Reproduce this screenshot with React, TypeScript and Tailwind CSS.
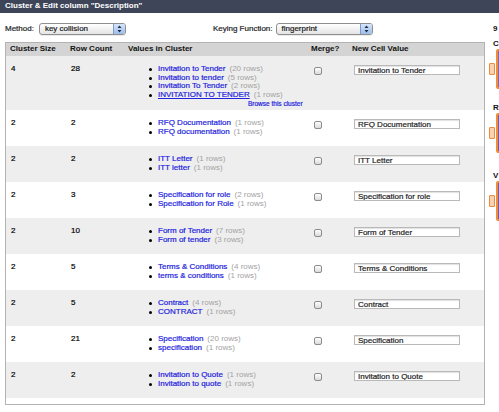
import React from 'react';

type Value = { label: string; count: number; underline?: boolean };

interface Cluster {
  size: number;
  rows: number;
  values: Value[];
  newValue: string;
  browse?: boolean;
}

const clusters: Cluster[] = [
  {
    size: 4,
    rows: 28,
    values: [
      { label: 'Invitation to Tender', count: 20 },
      { label: 'Invitation to tender', count: 5 },
      { label: 'Invitation To Tender', count: 2 },
      { label: 'INVITATION TO TENDER', count: 1, underline: true },
    ],
    newValue: 'Invitation to Tender',
    browse: true,
  },
  {
    size: 2,
    rows: 2,
    values: [
      { label: 'RFQ Documentation', count: 1 },
      { label: 'RFQ documentation', count: 1 },
    ],
    newValue: 'RFQ Documentation',
  },
  {
    size: 2,
    rows: 2,
    values: [
      { label: 'ITT Letter', count: 1 },
      { label: 'ITT letter', count: 1 },
    ],
    newValue: 'ITT Letter',
  },
  {
    size: 2,
    rows: 3,
    values: [
      { label: 'Specification for role', count: 2 },
      { label: 'Specification for Role', count: 1 },
    ],
    newValue: 'Specification for role',
  },
  {
    size: 2,
    rows: 10,
    values: [
      { label: 'Form of Tender', count: 7 },
      { label: 'Form of tender', count: 3 },
    ],
    newValue: 'Form of Tender',
  },
  {
    size: 2,
    rows: 5,
    values: [
      { label: 'Terms & Conditions', count: 4 },
      { label: 'terms & conditions', count: 1 },
    ],
    newValue: 'Terms & Conditions',
  },
  {
    size: 2,
    rows: 5,
    values: [
      { label: 'Contract', count: 4 },
      { label: 'CONTRACT', count: 1 },
    ],
    newValue: 'Contract',
  },
  {
    size: 2,
    rows: 21,
    values: [
      { label: 'Specification', count: 20 },
      { label: 'specification', count: 1 },
    ],
    newValue: 'Specification',
  },
  {
    size: 2,
    rows: 2,
    values: [
      { label: 'Invitation to Quote', count: 1 },
      { label: 'Invitation to quote', count: 1 },
    ],
    newValue: 'Invitation to Quote',
  },
];

function Select({ value, width }: { value: string; width: string }) {
  return (
    <div
      className={`${width} h-[12px] flex items-stretch rounded-[3px] border border-[#8f8f8f] bg-gradient-to-b from-white to-[#e4e4e4] shadow-[0_1px_0_rgba(0,0,0,0.08)] overflow-hidden`}
    >
      <span className="flex-1 pl-[5px] leading-[10px] text-[8px] text-[#1a1a1a]">{value}</span>
      <span className="w-[12px] flex items-center justify-center border-l border-[#7f9cc6] bg-gradient-to-b from-[#d6e6fb] to-[#9dbde9]">
        <svg width="5" height="8" viewBox="0 0 5 8">
          <path d="M2.5 0.5 L4.5 3 L0.5 3 Z" fill="#1d2a4a" />
          <path d="M2.5 7.5 L4.5 5 L0.5 5 Z" fill="#1d2a4a" />
        </svg>
      </span>
    </div>
  );
}

function Checkbox() {
  return (
    <div className="w-[8px] h-[8px] rounded-[2px] border border-[#8c8c8c] bg-gradient-to-b from-white to-[#d9d9d9]" />
  );
}

function ClusterRow({ c, shaded }: { c: Cluster; shaded: boolean }) {
  return (
    <div
      className={`grid grid-cols-[60px_58px_183px_41px_1fr] ${c.browse ? 'h-[54px]' : 'h-[36px]'} ${shaded ? 'bg-[#eeeeee]' : 'bg-white'}`}
    >
      <div className="pl-[5px] pt-[9px] text-black">{c.size}</div>
      <div className="pl-[5px] pt-[9px] text-black">{c.rows}</div>
      <div className="pl-[5px] pt-[9px]">
        {c.values.map((v) => (
          <div key={v.label} className="flex items-center pl-[20px] h-[8.7px] whitespace-nowrap">
            <span className="w-[3px] h-[3px] rounded-full bg-black mr-[6px] shrink-0" />
            <span className={`text-[#2222dd] ${v.underline ? 'underline' : ''}`}>{v.label}</span>
            <span className="ml-[4px] text-[#a3a3a3] [-webkit-text-stroke:0px]">({v.count} rows)</span>
          </div>
        ))}
        {c.browse && (
          <div className="pl-[119px] text-[6.5px] leading-[8px] text-[#2222dd] whitespace-nowrap">
            Browse this cluster
          </div>
        )}
      </div>
      <div className="pl-[7px] pt-[10.5px]">
        <Checkbox />
      </div>
      <div className="pl-[6px] pt-[9px]">
        <input
          readOnly
          value={c.newValue}
          className="w-[106px] h-[10px] border border-[#b9b9b9] bg-white pl-[3px] text-[8px] leading-[8px] text-[#222] outline-none shadow-[inset_0_1px_1px_rgba(0,0,0,0.12)] [font-family:'Liberation_Sans',Arial,sans-serif] [-webkit-text-stroke:0.2px]"
        />
      </div>
    </div>
  );
}

function SidePanel({ label, solid, top }: { label: string; solid: boolean; top: string }) {
  return (
    <div className={top}>
      <div className="pl-[4px] font-bold leading-[10px] text-[#111]">{label}</div>
      <div className="flex items-start">
        <div className="mt-[14px] w-[6px] h-[12px] rounded-[1px] border border-[#ee8a3e] bg-[#fbd2b0]" />
        <div
          className={`ml-[1px] w-[24px] h-[40px] rounded-[2px] border-2 border-[#f08c3a] ${solid ? 'bg-[#5c5ce2]' : 'bg-[#f2f2ff]'}`}
        >
          {!solid && <div className="w-[2px] h-full bg-[#6a6ae6]" />}
        </div>
      </div>
    </div>
  );
}

export default function App() {
  return (
    <div className="w-[499px] h-[412px] overflow-hidden bg-white text-[8px] leading-[8.7px] [font-family:'Liberation_Sans',Arial,sans-serif] [-webkit-text-stroke:0.2px]">
      <div className="h-[13px] bg-[#3e4559] pl-[5px] flex items-center text-white font-bold text-[8px] [-webkit-text-stroke:0px]">
        Cluster &amp; Edit column "Description"
      </div>

      <div className="flex items-start">
        <div className="w-[485px] pl-[5px] shrink-0">
          <div className="h-[29px] pt-[10px] flex items-start">
            <div className="flex items-center h-[12px]">
              <span className="text-[#222]">Method:</span>
              <div className="ml-[5px]">
                <Select value="key collision" width="w-[87px]" />
              </div>
              <span className="ml-[87px] text-[#222]">Keying Function:</span>
              <div className="ml-[3px]">
                <Select value="fingerprint" width="w-[97px]" />
              </div>
            </div>
          </div>

          <div className="w-[480px] border border-[#b3b3b3]">
            <div className="grid grid-cols-[60px_58px_183px_41px_1fr] h-[13px] items-center bg-[#d4d4d4] font-bold text-[#111] [-webkit-text-stroke:0px]">
              <div className="pl-[4px]">Cluster Size</div>
              <div className="pl-[4px]">Row Count</div>
              <div className="pl-[4px]">Values in Cluster</div>
              <div className="pl-[4px]">Merge?</div>
              <div className="pl-[4px]">New Cell Value</div>
            </div>
            {clusters.map((c, i) => (
              <ClusterRow key={i} c={c} shaded={i % 2 === 0} />
            ))}
            <div className="h-[6px]" />
          </div>
        </div>

        <div className="pl-[4px] pt-[10px] shrink-0 [-webkit-text-stroke:0px]">
          <div className="h-[12px] pl-[4px] flex items-center font-bold text-[#111]">9</div>
          <SidePanel label="C" solid={false} top="mt-[4px]" />
          <SidePanel label="R" solid top="mt-[14px]" />
          <SidePanel label="V" solid top="mt-[18px]" />
        </div>
      </div>
    </div>
  );
}
